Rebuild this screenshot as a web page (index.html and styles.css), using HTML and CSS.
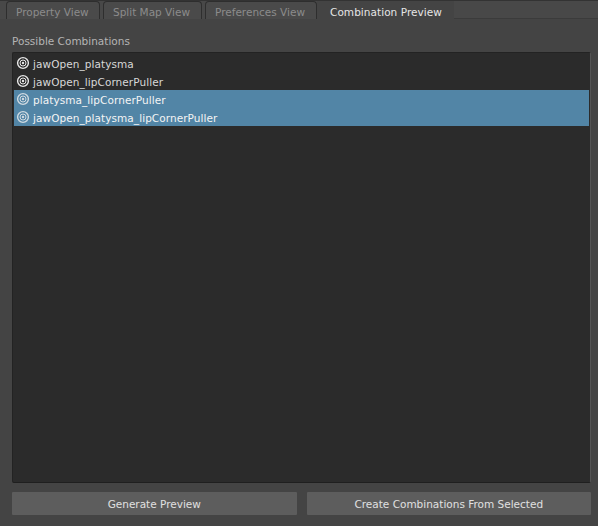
FILE: index.html
```html
<!DOCTYPE html>
<html lang="en">
<head>
<meta charset="UTF-8" />
<title>Combination Preview</title>
<link rel="stylesheet" href="styles.css">
</head>
<body>

<div class="tabs">
  <div class="tab tab-first">Property View</div>
  <div class="tab tab-second">Split Map View</div>
  <div class="tab tab-third">Preferences View</div>
  <div class="tab-active">Combination Preview</div>
  <div class="tab-rest"></div>
</div>

<div class="panel">
  <div class="label">Possible Combinations</div>
  <div class="list">
    <div class="row">
      <svg class="icon" viewBox="0 0 14 14"><circle class="ring" cx="7" cy="7" r="5.4" /><circle cx="7" cy="7" r="3" /><circle class="dot" cx="7" cy="7" r="1.2" /></svg>
      <span>jawOpen_platysma</span>
    </div>
    <div class="row">
      <svg class="icon" viewBox="0 0 14 14"><circle class="ring" cx="7" cy="7" r="5.4" /><circle cx="7" cy="7" r="3" /><circle class="dot" cx="7" cy="7" r="1.2" /></svg>
      <span>jawOpen_lipCornerPuller</span>
    </div>
    <div class="row selected">
      <svg class="icon" viewBox="0 0 14 14"><circle class="ring" cx="7" cy="7" r="5.4" /><circle cx="7" cy="7" r="3" /><circle class="dot" cx="7" cy="7" r="1.2" /></svg>
      <span>platysma_lipCornerPuller</span>
    </div>
    <div class="row selected">
      <svg class="icon" viewBox="0 0 14 14"><circle class="ring" cx="7" cy="7" r="5.4" /><circle cx="7" cy="7" r="3" /><circle class="dot" cx="7" cy="7" r="1.2" /></svg>
      <span>jawOpen_platysma_lipCornerPuller</span>
    </div>
  </div>
  <div class="buttons">
    <button>Generate Preview</button>
    <button>Create Combinations From Selected</button>
  </div>
</div>

</body>
</html>
```

FILE: styles.css
```css
html, body {
  margin: 0;
  height: 100%;
}
body {
  width: 598px;
  height: 526px;
  overflow: hidden;
  display: flex;
  flex-direction: column;
  background: #444444;
  font-family: "DejaVu Sans", sans-serif;
  font-size: 10.5px;
  color: #d8d8d8;
}
.tabs {
  display: flex;
  height: 18px;
  padding-left: 6px;
  border-top: 1px solid #333333;
  background: #484848;
}
.tab {
  box-sizing: border-box;
  height: 18px;
  line-height: 20px;
  margin-right: 3px;
  padding-left: 9px;
  color: #8c8c8c;
  background: #4a4a4a;
  border: 1px solid #2e2e2e;
  border-bottom: none;
  border-radius: 4px 4px 0 0;
}
.tab-first { width: 94px; }
.tab-second { width: 99px; }
.tab-third { width: 112px; margin-right: 0; }
.tab-active {
  width: 137px;
  padding-left: 13px;
  box-sizing: border-box;
  line-height: 22px;
  letter-spacing: 0.05px;
  color: #e6e6e6;
  background: #444444;
}
.tab-rest {
  flex: 1;
  border-bottom: 1px solid #3b3b3b;
}
.panel {
  flex: 1;
  display: flex;
  flex-direction: column;
  padding: 0 7px 11px 12px;
  min-height: 0;
}
.label {
  height: 33px;
  line-height: 44px;
  color: #b4b4b4;
}
.list {
  flex: 1;
  padding: 1px 1px 0 1px;
  background: #2b2b2b;
  border: 1px solid #232323;
  border-right-color: #555555;
  border-bottom-color: #1f1f1f;
  border-radius: 2px;
}
.row {
  display: flex;
  align-items: center;
  gap: 3px;
  height: 18px;
  padding-left: 2px;
  color: #d8d8d8;
  letter-spacing: 0.07px;
}
.row span {
  padding-top: 2px;
}
.row.selected {
  background: #5285a6;
  color: #f4f4f4;
}
.icon {
  width: 14px;
  height: 14px;
  flex: none;
}
.icon circle {
  fill: none;
  stroke: #e8e8e8;
  stroke-width: 1;
}
.icon .ring {
  stroke-width: 1.4;
}
.icon .dot {
  fill: #e8e8e8;
  stroke: none;
}
.row.selected .icon circle {
  stroke: #d0dae1;
}
.row.selected .icon .dot {
  fill: #d0dae1;
  stroke: none;
}
.buttons {
  display: flex;
  gap: 10px;
  margin-top: 9px;
}
button {
  flex: 1;
  height: 23px;
  padding: 0;
  border: none;
  border-radius: 1px;
  background: #5d5d5d;
  color: #e0e0e0;
  font: inherit;
}
```
